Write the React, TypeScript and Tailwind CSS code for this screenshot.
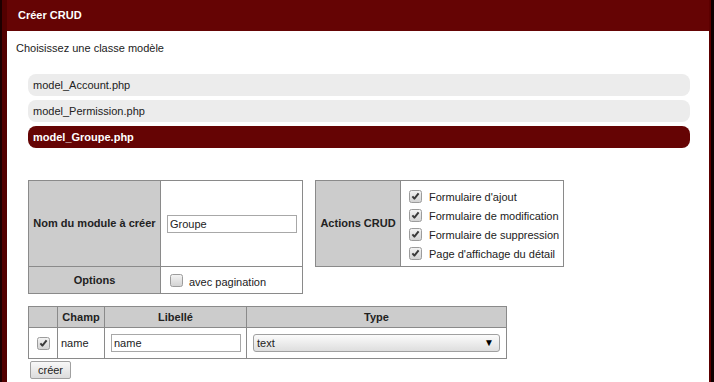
import React from 'react';

const models = ['model_Account.php', 'model_Permission.php', 'model_Groupe.php'];
const actions = [
  "Formulaire d'ajout",
  'Formulaire de modification',
  'Formulaire de suppression',
  "Page d'affichage du détail",
];

// old-style grey checkbox, drawn so it looks the same everywhere
const Box = ({ checked }: { checked?: boolean }) => (
  <svg width="13" height="13" viewBox="0 0 13 13" className="shrink-0">
    <defs>
      <linearGradient id="cbg" x1="0" y1="0" x2="0" y2="1">
        <stop offset="0" stopColor="#f4f4f4" />
        <stop offset="1" stopColor="#d2d2d2" />
      </linearGradient>
    </defs>
    <rect x="0.5" y="0.5" width="12" height="12" rx="2" fill="url(#cbg)" stroke="#9c9c9c" />
    {checked && (
      <path d="M3.4 6.4 L5.4 8.6 L9.6 3.4" stroke="#3a3a3a" strokeWidth="2" fill="none" strokeLinejoin="round" />
    )}
  </svg>
);

const TextBox = ({ value }: { value: string }) => (
  <input
    readOnly
    value={value}
    className="h-[18px] w-[130px] border border-[#a8a8a8] bg-white px-[2px] text-[11px] text-[#222] outline-none"
  />
);

export default function App() {
  return (
    <div className="flex h-[382px] w-[714px] overflow-hidden bg-white font-['Liberation_Sans',Arial,sans-serif] text-[11px] leading-[13px] text-[#222]">
      <div className="w-[2px] bg-[#1c0000]" />
      <div className="w-[5px] bg-[#520000]" />

      <div className="flex flex-1 flex-col">
        <div className="flex h-[31px] items-center bg-[#650404] pl-[11px] font-bold text-white">Créer CRUD</div>

        <div className="pl-[9px] pt-[11px]">Choisissez une classe modèle</div>

        <div className="ml-[21px] mr-[19px] mt-[19px] flex flex-col gap-[4px]">
          {models.map((m, i) => {
            const active = i === models.length - 1;
            return (
              <div
                key={m}
                className={
                  active
                    ? 'flex h-[22px] items-center rounded-[8px] bg-[#650404] pl-[5px] font-bold text-white'
                    : 'flex h-[22px] items-center rounded-[8px] bg-[#ececec] pl-[5px]'
                }
              >
                {m}
              </div>
            );
          })}
        </div>

        <div className="ml-[21px] mt-[32px] flex items-start gap-[12px]">
          <div className="grid grid-cols-[131px_141px] grid-rows-[85px_26px] gap-px bg-[#8a8a8a] p-px">
            <div className="flex items-center justify-center bg-[#cccccc] font-bold">Nom du module à créer</div>
            <div className="flex items-center bg-white pl-[6px]">
              <TextBox value="Groupe" />
            </div>
            <div className="flex items-center justify-center bg-[#cccccc] font-bold">Options</div>
            <div className="flex items-center gap-[6px] bg-white pl-[9px] pt-[1px]">
              <Box />
              <span className="pt-[3px]">avec pagination</span>
            </div>
          </div>

          <div className="grid grid-cols-[84px_162px] grid-rows-[85px] gap-px bg-[#8a8a8a] p-px">
            <div className="flex items-center justify-center bg-[#cccccc] font-bold">Actions CRUD</div>
            <div className="flex flex-col justify-center bg-white pl-[8px] pt-[2px]">
              {actions.map((a) => (
                <div key={a} className="flex h-[19px] items-center gap-[7px]">
                  <Box checked />
                  <span className="pt-[2px]">{a}</span>
                </div>
              ))}
            </div>
          </div>
        </div>

        <div className="ml-[21px] mt-[12px] grid w-fit grid-cols-[28px_46px_141px_259px] grid-rows-[20px_30px] gap-px bg-[#8a8a8a] p-px">
          <div className="bg-[#cccccc]" />
          <div className="flex items-center justify-center bg-[#cccccc] font-bold">Champ</div>
          <div className="flex items-center justify-center bg-[#cccccc] font-bold">Libellé</div>
          <div className="flex items-center justify-center bg-[#cccccc] font-bold">Type</div>

          <div className="flex items-center justify-center bg-white">
            <Box checked />
          </div>
          <div className="flex items-center bg-white pl-[3px]">name</div>
          <div className="flex items-center bg-white pl-[6px]">
            <TextBox value="name" />
          </div>
          <div className="flex items-center bg-white pl-[6px]">
            <div className="flex h-[18px] w-[247px] items-center justify-between rounded-[3px] border border-[#a0a0a0] bg-gradient-to-b from-[#fbfbfb] to-[#dedede] pl-[3px] pr-[5px]">
              <span>text</span>
              <span className="text-[10px] leading-[10px] text-black">▼</span>
            </div>
          </div>
        </div>

        <div className="ml-[23px] mt-[2px]">
          <button className="flex h-[18px] w-[41px] items-center justify-center rounded-[2px] border border-[#a0a0a0] bg-gradient-to-b from-[#f8f8f8] to-[#dcdcdc] text-[11px] text-[#222]">
            créer
          </button>
        </div>
      </div>

      <div className="w-[2px] bg-[#5c0000]" />
      <div className="w-[3px] bg-[#0e0000]" />
    </div>
  );
}
